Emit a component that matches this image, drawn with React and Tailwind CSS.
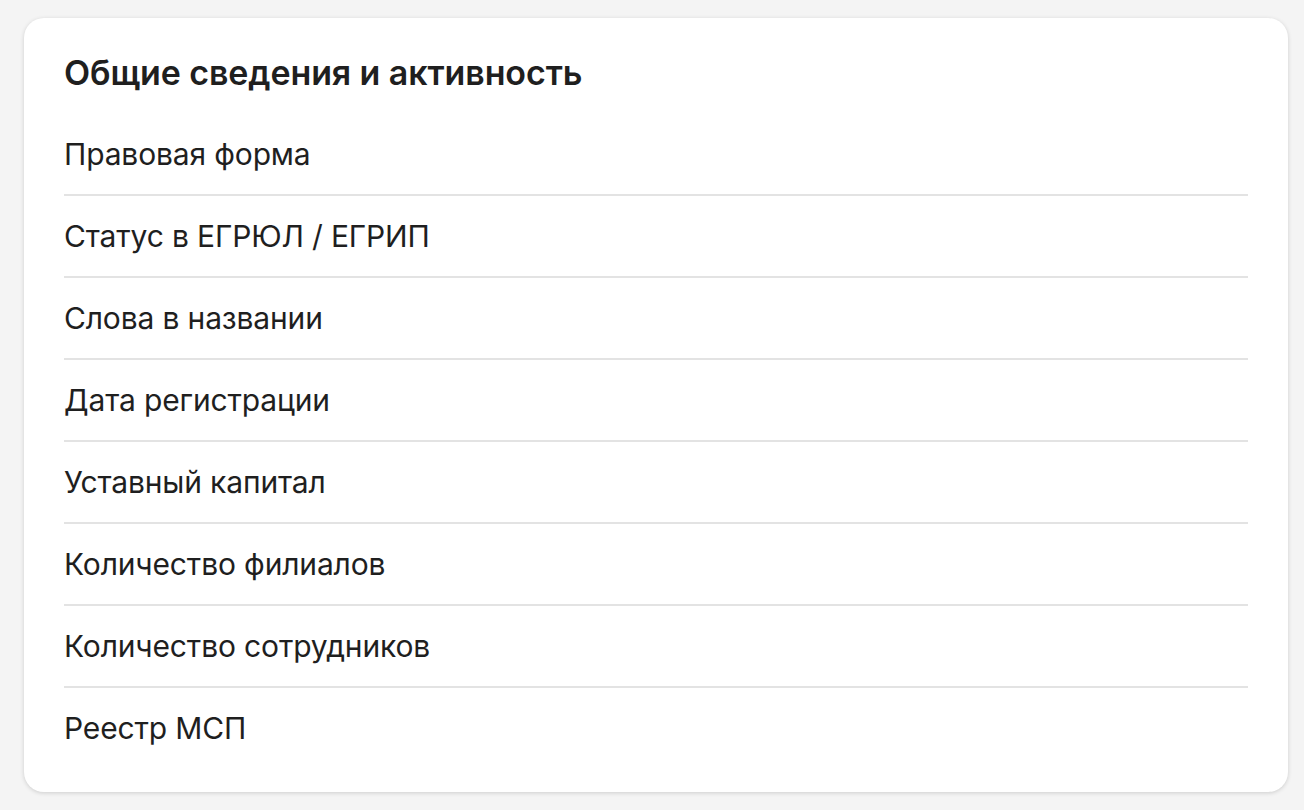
import React from 'react';

const rows = [
  'Правовая форма',
  'Статус в ЕГРЮЛ / ЕГРИП',
  'Слова в названии',
  'Дата регистрации',
  'Уставный капитал',
  'Количество филиалов',
  'Количество сотрудников',
  'Реестр МСП',
];

export default function App() {
  return (
    <div className="min-h-[810px] bg-[#f4f4f4] pt-[18px] pb-[18px] pl-6 pr-4" style={{ fontFamily: 'Inter, "Noto Sans", sans-serif' }}>
      <div className="bg-white rounded-[20px] shadow-[0_1px_4px_rgba(0,0,0,0.16)] px-10 pt-[35px] pb-6 text-[#1f1f1f]">
        <h2 className="text-[34px] leading-10 font-semibold tracking-[-0.1px]">Общие сведения и активность</h2>
        <ul className="mt-[21px]">
          {rows.map((r, i) => (
            <li key={r} className={`py-6 text-[30px] leading-8 tracking-[-0.15px] ${i > 0 ? 'border-t-2 border-[#e3e3e3]' : ''}`}>
              {r}
            </li>
          ))}
        </ul>
      </div>
    </div>
  );
}
